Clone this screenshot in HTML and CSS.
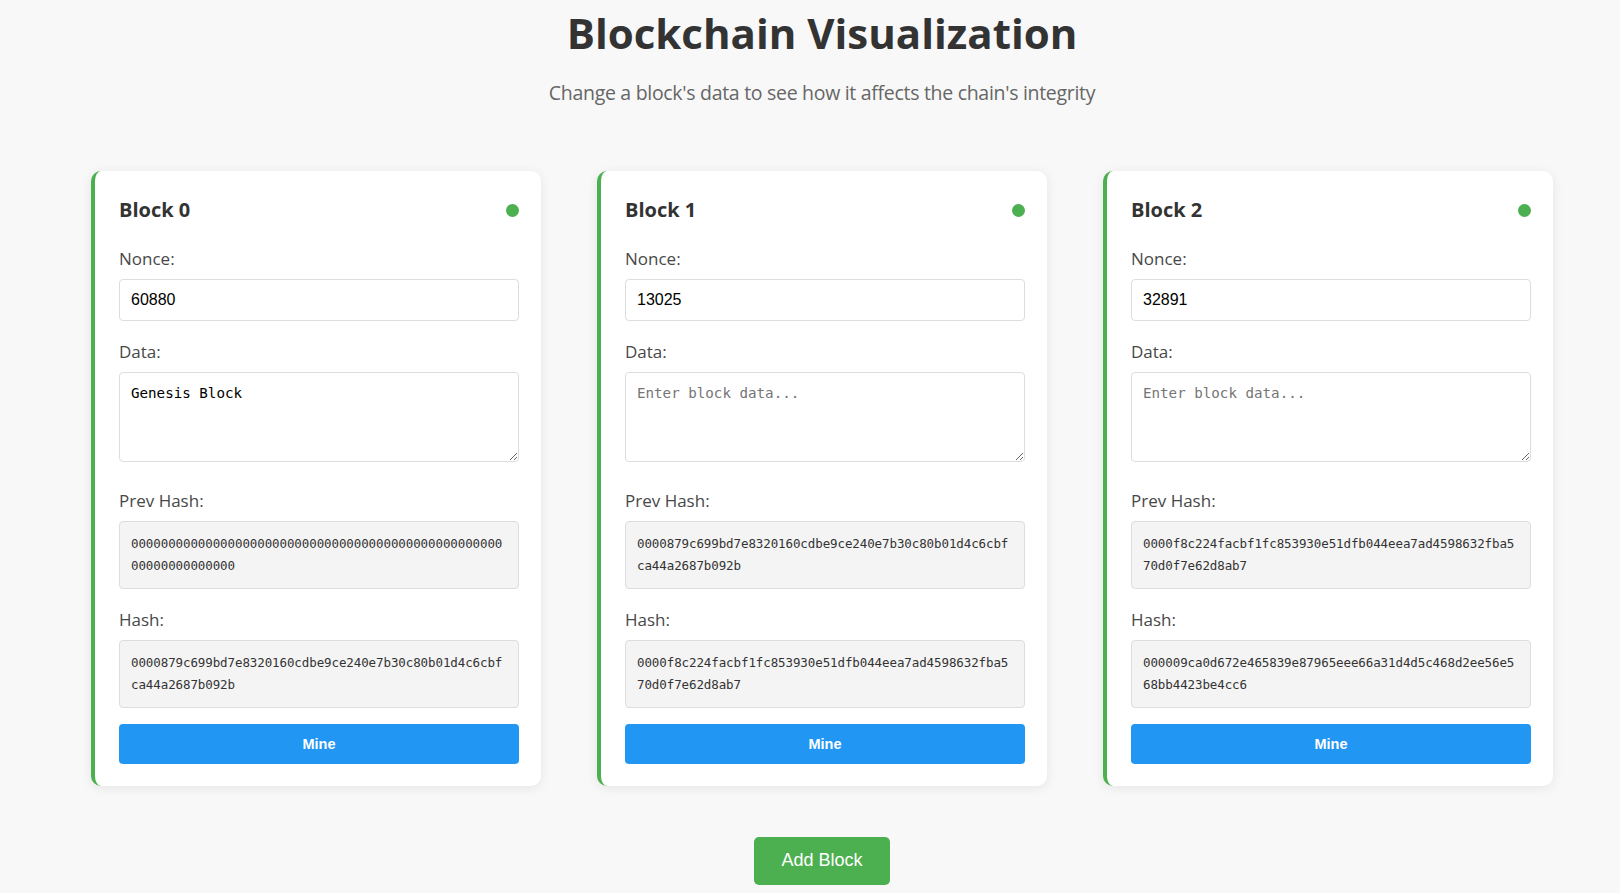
FILE: index.html
```html
<!DOCTYPE html>
<html lang="en">
<head>
<meta charset="utf-8">
<title>Blockchain Visualization</title>
<link rel="stylesheet" href="styles.css">
</head>
<body>
<header class="page-header">
  <h1 class="title">Blockchain Visualization</h1>
  <p class="subtitle">Change a block's data to see how it affects the chain's integrity</p>
</header>

<main class="chain">
  <section class="block">
    <div class="block-head">
      <h3 class="block-title">Block 0</h3>
      <span class="status-dot"></span>
    </div>
    <div class="field">
      <label class="field-label">Nonce:</label>
      <input class="text-input" type="text" value="60880">
    </div>
    <div class="field field-area">
      <label class="field-label">Data:</label>
      <textarea class="data-input" placeholder="Enter block data...">Genesis Block</textarea>
    </div>
    <div class="field">
      <label class="field-label">Prev Hash:</label>
      <div class="hash-box">0000000000000000000000000000000000000000000000000000000000000000</div>
    </div>
    <div class="field">
      <label class="field-label">Hash:</label>
      <div class="hash-box">0000879c699bd7e8320160cdbe9ce240e7b30c80b01d4c6cbfca44a2687b092b</div>
    </div>
    <button class="mine-btn">Mine</button>
  </section>

  <section class="block">
    <div class="block-head">
      <h3 class="block-title">Block 1</h3>
      <span class="status-dot"></span>
    </div>
    <div class="field">
      <label class="field-label">Nonce:</label>
      <input class="text-input" type="text" value="13025">
    </div>
    <div class="field field-area">
      <label class="field-label">Data:</label>
      <textarea class="data-input" placeholder="Enter block data..."></textarea>
    </div>
    <div class="field">
      <label class="field-label">Prev Hash:</label>
      <div class="hash-box">0000879c699bd7e8320160cdbe9ce240e7b30c80b01d4c6cbfca44a2687b092b</div>
    </div>
    <div class="field">
      <label class="field-label">Hash:</label>
      <div class="hash-box">0000f8c224facbf1fc853930e51dfb044eea7ad4598632fba570d0f7e62d8ab7</div>
    </div>
    <button class="mine-btn">Mine</button>
  </section>

  <section class="block">
    <div class="block-head">
      <h3 class="block-title">Block 2</h3>
      <span class="status-dot"></span>
    </div>
    <div class="field">
      <label class="field-label">Nonce:</label>
      <input class="text-input" type="text" value="32891">
    </div>
    <div class="field field-area">
      <label class="field-label">Data:</label>
      <textarea class="data-input" placeholder="Enter block data..."></textarea>
    </div>
    <div class="field">
      <label class="field-label">Prev Hash:</label>
      <div class="hash-box">0000f8c224facbf1fc853930e51dfb044eea7ad4598632fba570d0f7e62d8ab7</div>
    </div>
    <div class="field">
      <label class="field-label">Hash:</label>
      <div class="hash-box">000009ca0d672e465839e87965eee66a31d4d5c468d2ee56e568bb4423be4cc6</div>
    </div>
    <button class="mine-btn">Mine</button>
  </section>
</main>

<div class="actions">
  <button class="add-btn">Add Block</button>
</div>
</body>
</html>
```

FILE: styles.css
```css
* { box-sizing: border-box; }

body {
  margin: 0;
  padding-left: 24px;
  background: #f8f8f8;
  font-family: "Open Sans", "Noto Sans", sans-serif;
  color: #333;
}

.page-header {
  text-align: center;
  padding-top: 8px;
}

.title {
  margin: 0;
  font-size: 42px;
  line-height: 50px;
  font-weight: 700;
  color: #333;
}

.subtitle {
  margin: 22px 0 0;
  font-size: 19.5px;
  line-height: 26px;
  letter-spacing: -0.3px;
  color: #666;
}

.chain {
  display: flex;
  justify-content: center;
  gap: 56px;
  margin-top: 65px;
}

.block {
  width: 450px;
  background: #fff;
  border-left: 4px solid #4caf50;
  border-radius: 10px;
  padding: 25px 22px 22px 24px;
  box-shadow: 0 2px 12px rgba(0, 0, 0, 0.08);
}

.block-head {
  display: flex;
  justify-content: space-between;
  align-items: center;
  margin-bottom: 23px;
}

.block-title {
  margin: 0;
  font-size: 20px;
  line-height: 28px;
  font-weight: 700;
  color: #333;
}

.status-dot {
  width: 13px;
  height: 13px;
  border-radius: 50%;
  background: #4caf50;
}

.field { margin-bottom: 19px; }
.field-area { margin-bottom: 27px; }

.field-label {
  display: block;
  font-size: 17px;
  line-height: 24px;
  color: #484848;
  margin-bottom: 8px;
}

.text-input {
  display: block;
  width: 100%;
  height: 42px;
  padding: 0 11px;
  border: 1px solid #ddd;
  border-radius: 4px;
  font-family: "Liberation Sans", Arial, sans-serif;
  font-size: 16px;
  color: #000;
  background: #fff;
}

.data-input {
  display: block;
  width: 100%;
  height: 90px;
  padding: 10px 11px;
  border: 1px solid #ddd;
  border-radius: 4px;
  font-family: "DejaVu Sans Mono", "Liberation Mono", monospace;
  font-size: 14.2px;
  line-height: 20px;
  color: #000;
  resize: vertical;
}

.data-input::placeholder { color: #757575; }

.hash-box {
  background: #f4f4f4;
  border: 1px solid #ddd;
  border-radius: 4px;
  padding: 11px;
  font-family: "DejaVu Sans Mono", "Liberation Mono", monospace;
  font-size: 12.5px;
  letter-spacing: -0.1px;
  line-height: 22px;
  color: #333;
  word-break: break-all;
}

.mine-btn {
  display: block;
  width: 100%;
  height: 40px;
  margin-top: -3px;
  border: none;
  border-radius: 4px;
  background: #2196f3;
  color: #fff;
  font-family: "Liberation Sans", Arial, sans-serif;
  font-size: 14.5px;
  font-weight: 700;
}

.actions {
  display: flex;
  justify-content: center;
  margin-top: 51px;
}

.add-btn {
  padding: 13px 27px;
  border: none;
  border-radius: 5px;
  background: #4caf50;
  color: #fff;
  font-family: "Liberation Sans", Arial, sans-serif;
  font-size: 18px;
  line-height: 21.6px;
}
```
